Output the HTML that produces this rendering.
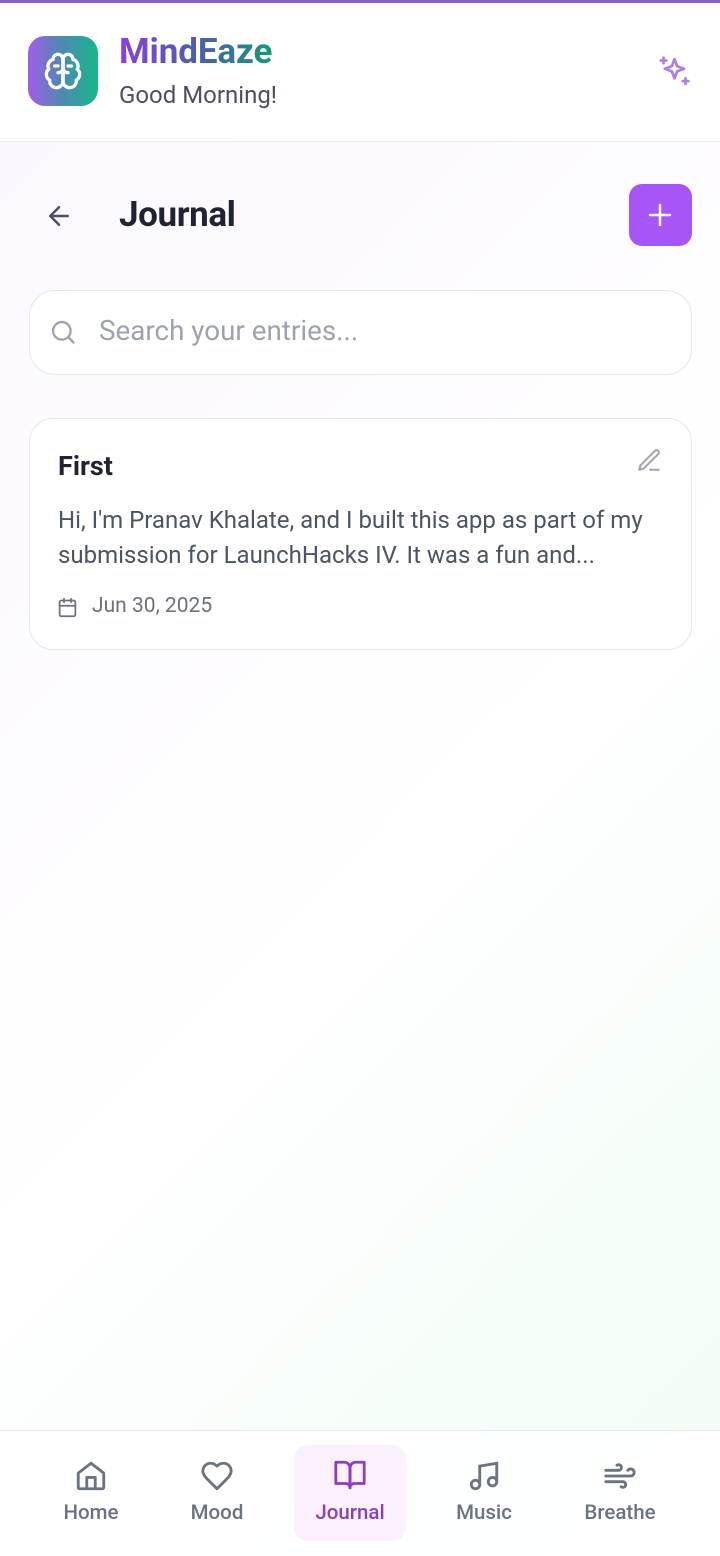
<!DOCTYPE html>
<html><head><meta charset="utf-8"><style>
*{margin:0;padding:0;box-sizing:border-box}
body{width:720px;height:1556px;overflow:hidden;font-family:"Roboto","Liberation Sans",sans-serif;background:linear-gradient(135deg,#faf6ff 0%,#ffffff 55%,#effdf5 100%);position:relative}
.abs{position:absolute}
.hdr{left:0;top:0;width:720px;height:142px;background:#fff;border-top:3px solid #8a5cd0;border-bottom:1px solid #ececf0}
.logo{left:28px;top:36px;width:70px;height:70px;border-radius:17px;background:linear-gradient(90deg,#a05ee8,#4b8bb0 50%,#16b88a)}
.brand{left:119px;top:31px;font-size:35px;font-weight:bold;letter-spacing:-0.1px;background:linear-gradient(90deg,#8a3fe0,#4a60a8 55%,#139a78);-webkit-background-clip:text;color:transparent}
.gm{left:119px;top:81px;font-size:24px;color:#4b5060}
.ttl{left:119px;top:194px;font-size:35px;font-weight:bold;color:#1f2430;letter-spacing:-0.4px}
.plus{left:629px;top:184px;width:63px;height:62px;border-radius:13px;background:#a855f7}
.search{left:29px;top:290px;width:663px;height:85px;border-radius:26px;background:#fff;border:1px solid #e5e7eb}
.card{left:29px;top:418px;width:663px;height:232px;border-radius:24px;background:#fff;border:1px solid #e5e7eb}
.nav{left:0;top:1430px;width:720px;height:126px;background:rgba(255,255,255,.9);border-top:1px solid #e5e7eb}
.item{position:absolute;top:70px;font-size:20.5px;font-weight:500;color:#6b7280;transform:translateX(-50%);white-space:nowrap}
svg{position:absolute}
</style></head><body>
<div class="abs hdr"></div>
<div class="abs logo"></div>
<svg style="left:43px;top:51px" width="40" height="40" viewBox="0 0 24 24" fill="none" stroke="#fff" stroke-width="2" stroke-linecap="round" stroke-linejoin="round"><path d="M12 5a3 3 0 1 0-5.997.125 4 4 0 0 0-2.526 5.77 4 4 0 0 0 .556 6.588A4 4 0 1 0 12 18Z"/><path d="M12 5a3 3 0 1 1 5.997.125 4 4 0 0 1 2.526 5.770 4 4 0 0 1-.556 6.588A4 4 0 1 1 12 18Z"/><path d="M12 5v13M9 13c1.5 0 3-1 3-3M15 13c-1.5 0-3-1-3-3M7 9h2M17 9h-2"/></svg>
<div class="abs brand">MindEaze</div>
<div class="abs gm">Good Morning!</div>
<svg style="left:658px;top:55px" width="33" height="33" viewBox="0 0 24 24" fill="none" stroke="#b07fe3" stroke-width="2" stroke-linecap="round" stroke-linejoin="round"><path d="M12 3l1.9 5.1L19 10l-5.1 1.9L12 17l-1.9-5.1L5 10l5.1-1.9z"/><path d="M4 2v4M2 4h4M20 17v4M18 19h4"/></svg>

<svg style="left:44px;top:201px" width="30" height="30" viewBox="0 0 24 24" fill="none" stroke="#4b5060" stroke-width="2" stroke-linecap="round" stroke-linejoin="round"><path d="M19 12H5M12 19l-7-7 7-7"/></svg>
<div class="abs ttl">Journal</div>
<div class="abs plus"></div>
<svg style="left:645px;top:200px" width="30" height="30" viewBox="0 0 24 24" fill="none" stroke="#fff" stroke-width="2" stroke-linecap="round"><path d="M12 4v16M4 12h16"/></svg>

<div class="abs search"></div>
<svg style="left:49px;top:318px" width="28" height="28" viewBox="0 0 24 24" fill="none" stroke="#9ca3af" stroke-width="2" stroke-linecap="round"><circle cx="11" cy="11" r="7.5"/><path d="M21 21l-4.3-4.3"/></svg>
<div class="abs" style="left:99px;top:314px;font-size:27.8px;color:#9ca3af">Search your entries...</div>

<div class="abs card"></div>
<div class="abs" style="left:58px;top:450px;font-size:27px;font-weight:bold;color:#1f2430">First</div>
<svg style="left:636px;top:447px" width="26" height="26" viewBox="0 0 24 24" fill="none" stroke="#9ca3af" stroke-width="1.8" stroke-linecap="round" stroke-linejoin="round"><path d="M13 21h8"/><path d="M17.5 3.5a2.1 2.1 0 0 1 3 3L7 20l-4 1 1-4z"/></svg>
<div class="abs" style="left:58px;top:503px;font-size:24px;line-height:35px;color:#4b5563;width:640px;white-space:nowrap">Hi, I'm Pranav Khalate, and I built this app as part of my<br>submission for LaunchHacks IV. It was a fun and...</div>
<svg style="left:57px;top:597px" width="21" height="21" viewBox="0 0 24 24" fill="none" stroke="#6b7280" stroke-width="2" stroke-linecap="round"><rect x="3" y="4" width="18" height="18" rx="2"/><path d="M16 2v4M8 2v4M3 10h18"/></svg>
<div class="abs" style="left:92px;top:594px;font-size:21px;color:#6b7280">Jun 30, 2025</div>

<div class="abs nav">
<div class="abs" style="left:294px;top:14px;width:112px;height:96px;border-radius:14px;background:#faf0fe"></div>
<svg style="left:74px;top:28px" width="34" height="34" viewBox="0 0 24 24" fill="none" stroke="#6b7280" stroke-width="2" stroke-linejoin="round"><path d="M3 10l9-7 9 7v10a1 1 0 0 1-1 1H4a1 1 0 0 1-1-1z"/><path d="M9 21v-8h6v8"/></svg>
<svg style="left:200px;top:28px" width="34" height="34" viewBox="0 0 24 24" fill="none" stroke="#6b7280" stroke-width="2" stroke-linejoin="round"><path d="M19 14c1.5-1.5 3-3.2 3-5.5A5.5 5.5 0 0 0 16.5 3c-1.8 0-3 .5-4.5 2-1.5-1.5-2.7-2-4.5-2A5.5 5.5 0 0 0 2 8.5c0 2.3 1.5 4 3 5.5l7 7z"/></svg>
<svg style="left:333px;top:27px" width="34" height="34" viewBox="0 0 24 24" fill="none" stroke="#8e3fc0" stroke-width="2" stroke-linejoin="round"><path d="M2 3h6a4 4 0 0 1 4 4v14a3 3 0 0 0-3-3H2z"/><path d="M22 3h-6a4 4 0 0 0-4 4v14a3 3 0 0 1 3-3h7z"/></svg>
<svg style="left:467px;top:28px" width="34" height="34" viewBox="0 0 24 24" fill="none" stroke="#6b7280" stroke-width="2"><path d="M9 18V5l12-2v13"/><circle cx="6" cy="18" r="3"/><circle cx="18" cy="16" r="3"/></svg>
<svg style="left:603px;top:28px" width="34" height="34" viewBox="0 0 24 24" fill="none" stroke="#6b7280" stroke-width="2" stroke-linecap="round"><path d="M12.8 19.6A2 2 0 1 0 14 16H2"/><path d="M17.5 8a2.5 2.5 0 1 1 2 4H2"/><path d="M9.8 4.4A2 2 0 1 1 11 8H2"/></svg>
<div class="item" style="left:91px">Home</div>
<div class="item" style="left:217px">Mood</div>
<div class="item" style="left:350px;color:#8e3fc0">Journal</div>
<div class="item" style="left:484px">Music</div>
<div class="item" style="left:620px">Breathe</div>
</div>
</body></html>
